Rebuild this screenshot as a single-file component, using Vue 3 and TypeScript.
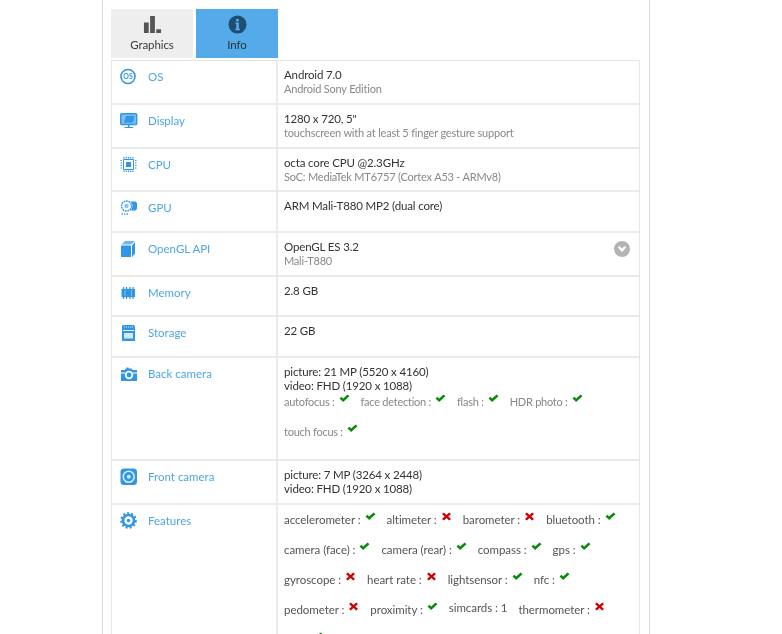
<script setup lang="ts">
interface Feat { label: string; ok?: boolean; shift?: boolean }
interface Row {
  key: string; label: string; primary: string[]; secondary?: string;
  lines?: Feat[][]; featMuted?: boolean; size: string; chevron?: boolean;
}
const rows: Row[] = [
  { key: 'os', label: 'OS', primary: ['Android 7.0'], secondary: 'Android Sony Edition', size: 'r44' },
  { key: 'display', label: 'Display', primary: ['1280 x 720, 5"'], secondary: 'touchscreen with at least 5 finger gesture support', size: 'r44' },
  { key: 'cpu', label: 'CPU', primary: ['octa core CPU @2.3GHz'], secondary: 'SoC: MediaTek MT6757 (Cortex A53 - ARMv8)', size: 'r43' },
  { key: 'gpu', label: 'GPU', primary: ['ARM Mali-T880 MP2 (dual core)'], size: 'r41' },
  { key: 'gl', label: 'OpenGL API', primary: ['OpenGL ES 3.2'], secondary: 'Mali-T880', size: 'r44', chevron: true },
  { key: 'mem', label: 'Memory', primary: ['2.8 GB'], size: 'r40' },
  { key: 'sto', label: 'Storage', primary: ['22 GB'], size: 'r41' },
  { key: 'back', label: 'Back camera', primary: ['picture: 21 MP (5520 x 4160)', 'video: FHD (1920 x 1088)'], size: 'r103', featMuted: true,
    lines: [
      [{ label: 'autofocus :', ok: true }, { label: 'face detection :', ok: true }, { label: 'flash :', ok: true }, { label: 'HDR photo :', ok: true }],
      [{ label: 'touch focus :', ok: true }],
    ] },
  { key: 'front', label: 'Front camera', primary: ['picture: 7 MP (3264 x 2448)', 'video: FHD (1920 x 1088)'], size: 'r44' },
  { key: 'feat', label: 'Features', primary: [], size: 'rf',
    lines: [
      [{ label: 'accelerometer :', ok: true }, { label: 'altimeter :', ok: false }, { label: 'barometer :', ok: false }, { label: 'bluetooth :', ok: true }],
      [{ label: 'camera (face) :', ok: true }, { label: 'camera (rear) :', ok: true }, { label: 'compass :', ok: true }, { label: 'gps :', ok: true }],
      [{ label: 'gyroscope :', ok: false }, { label: 'heart rate :', ok: false }, { label: 'lightsensor :', ok: true }, { label: 'nfc :', ok: true }],
      [{ label: 'pedometer :', ok: false }, { label: 'proximity :', ok: true }, { label: 'simcards : 1', shift: true }, { label: 'thermometer :', ok: false }],
      [{ label: 'wifi :', ok: true }],
    ] },
];
</script>

<template>
  <div class="page">
    <div class="sheet">
      <div class="tabs">
        <div class="tab">
          <svg class="tab-ico" viewBox="0 0 20 20"><path fill="#555" d="M1 8h5v11H1zM7.500 1h5v18h-5zM14 15h5v4h-5z"/></svg>
          <span>Graphics</span>
        </div>
        <div class="tab active">
          <svg class="tab-ico" viewBox="0 0 20 20"><circle cx="10" cy="10" r="9.500" fill="#1d4f73"/><circle cx="10" cy="5.500" r="1.500" fill="#5aa9e6"/><path fill="#5aa9e6" d="M7.800 8h3.700v6.500h1v1.500H7.600v-1.500h1.100V9.500h-.9z"/></svg>
          <span>Info</span>
        </div>
      </div>
      <div class="table">
        <div v-for="r in rows" :key="r.key" class="row" :class="r.size">
          <div class="head">
            <svg class="ico" viewBox="0 0 18 18">
              <template v-if="r.key === 'os'">
                <circle cx="8" cy="8.500" r="7" fill="none" stroke="#2f96e8" stroke-width="1.600"/>
                <text x="8" y="11" text-anchor="middle" class="ico-text">OS</text>
              </template>
              <template v-else-if="r.key === 'display'">
                <rect x="0.700" y="1.700" width="16" height="10.800" rx="1" fill="#7dbdf0" stroke="#2f96e8" stroke-width="1.400"/>
                <path fill="#2f96e8" d="M4 10.500 6 4h8.500l-1.500 6.500z"/>
                <path fill="#2f96e8" d="M8 13h1.500v2H13v1H4.500v-1H8z"/>
              </template>
              <template v-else-if="r.key === 'cpu'">
                <path fill="none" stroke="#2f96e8" d="M3.500 3.500h10v10h-10z"/>
                <path fill="#2f96e8" d="M6 6h5v5H6z"/>
                <path stroke="#2f96e8" stroke-width="1.200" fill="none" d="M4 1v1.500M6.300 1v1.500M8.500 1v1.500M10.700 1v1.500M13 1v1.500M4 14.500V16M6.300 14.500V16M8.500 14.500V16M10.700 14.500V16M13 14.500V16M0.500 4.500H2M0.500 7H2M0.500 9.500H2M0.500 12H2M15 4.500h1.500M15 7h1.500M15 9.500h1.500M15 12h1.500"/>
              </template>
              <template v-else-if="r.key === 'gpu'">
                <path fill="#2f96e8" d="M6 2.500h9.500l1.500 1.500v6l-1.500 1.500H9z"/>
                <circle cx="6.500" cy="7" r="6" fill="#fff"/>
                <circle cx="6.500" cy="7" r="5" fill="none" stroke="#2f96e8" stroke-width="1.400" stroke-dasharray="1.800 .7"/>
                <circle cx="6.500" cy="7" r="2.200" fill="#8ac4f2"/>
                <path stroke="#2f96e8" stroke-width="1.300" stroke-dasharray="1.300 1.300" d="M1.500 15h8"/>
              </template>
              <template v-else-if="r.key === 'gl'">
                <path fill="#2f96e8" d="M1 5.500h10V17H1z"/>
                <path fill="#6fb8ef" d="M1.500 4.500 5 1h9.500L11.500 4.500z"/>
                <path fill="#2f96e8" d="M12 5.500 15 2v11.500L12 17z"/>
              </template>
              <template v-else-if="r.key === 'mem'">
                <path fill="#2f96e8" d="M1.500 5h13.500v8H1.500z"/>
                <path stroke="#2f96e8" stroke-width="1.300" d="M3.500 3v2M6.500 3v2M10 3v2M13 3v2M3.500 13v2M6.500 13v2M10 13v2M13 13v2"/>
                <path stroke="#8ac4f2" stroke-width=".8" d="M5 6v6M11.500 6v6"/>
              </template>
              <template v-else-if="r.key === 'sto'">
                <path fill="#2f96e8" d="M3 1h11l1 1.500V17H2V2z"/>
                <path stroke="#fff" stroke-width=".8" stroke-dasharray="1 1" d="M4 3h9"/>
                <path fill="#fff" d="M3 6h11v1H3z"/>
                <path fill="#d5eafa" d="M4 9h9v5.500H4z"/>
              </template>
              <template v-else-if="r.key === 'back'">
                <path fill="#2f96e8" d="M1 5h4l.6-1.500h1V2.500h2v1h3l1 1.500H17v11H1z"/>
                <path fill="#fff" d="M1 7.500h4v1H1zM13 7.500h4v1h-4z"/>
                <circle cx="9" cy="10" r="4.200" fill="#fff"/>
                <circle cx="9" cy="10" r="2.400" fill="#2f96e8"/>
              </template>
              <template v-else-if="r.key === 'front'">
                <rect x="0.500" y="0.500" width="16.500" height="16.500" rx="3.500" fill="#2f96e8"/>
                <circle cx="8.700" cy="8.700" r="5.500" fill="none" stroke="#d6ebfb" stroke-width="1.600"/>
                <circle cx="8.700" cy="8.700" r="2" fill="#d6ebfb"/>
              </template>
              <template v-else>
                <circle cx="8.500" cy="8.500" r="5.500" fill="none" stroke="#2f96e8" stroke-width="2.600"/>
                <circle cx="8.500" cy="8.500" r="7.300" fill="none" stroke="#2f96e8" stroke-width="2" stroke-dasharray="2.050 2.050"/>
                <circle cx="8.500" cy="8.500" r="1.800" fill="#2f96e8"/>
              </template>
            </svg>
            <span class="label">{{ r.label }}</span>
          </div>
          <div class="body">
            <div v-for="p in r.primary" :key="p" class="primary">{{ p }}</div>
            <div v-if="r.secondary" class="secondary">{{ r.secondary }}</div>
            <div v-if="r.lines" class="feats" :class="{ muted: r.featMuted }">
              <div v-for="(line, i) in r.lines" :key="i" class="line">
                <span v-for="f in line" :key="f.label" class="feat" :class="{ shift: f.shift }">
                  {{ f.label }}
                  <svg v-if="f.ok === true" class="mark" viewBox="0 0 12 10"><path fill="#0a8a0a" d="M0.500 5 2.500 3l2 2L9.500 0.500l2 2-7 6.500z"/></svg>
                  <svg v-else-if="f.ok === false" class="mark" viewBox="0 0 12 10"><path fill="#d00000" d="M1 2.300 3 .5l3 2.700L9 .5l2 1.800L8 5l3 2.700-2 1.800-3-2.700-3 2.700-2-1.800L4 5z"/></svg>
                </span>
              </div>
            </div>
            <div v-if="r.chevron" class="chevron">
              <svg viewBox="0 0 16 16"><circle cx="8" cy="8" r="8" fill="#b4b4b4"/><path fill="#fff" d="M3.800 6.200 5.500 5 8 7.500 10.500 5l1.700 1.200L8 11.200z"/></svg>
            </div>
          </div>
        </div>
      </div>
    </div>
  </div>
</template>

<style>
html, body { margin: 0; overflow: hidden; background: #fff; }
</style>

<style scoped>
.page { height: 634px; overflow: hidden; background: #fff; font-family: Lato, "Noto Sans", sans-serif; font-size: 11.500px; line-height: 14px; color: #333; filter: blur(.3px); }
.sheet { width: 529px; margin-left: 102px; padding: 9px 9px 0 8px; border-left: 1px solid #ddd; border-right: 1px solid #ddd; height: 625px; }
.tabs { display: flex; gap: 3px; height: 49px; margin-bottom: 2px; }
.tab { width: 82px; background: #eee; display: flex; flex-direction: column; align-items: center; padding-top: 6px; box-sizing: border-box; color: #3c3c3c; letter-spacing: -.1px; }
.tab span { margin-top: 4px; }
.tab.active { background: #55abe9; color: #233; }
.tab-ico { width: 19px; height: 19px; }
.table { border: 1px solid #e6e6e6; border-bottom: 0; }
.row { display: grid; grid-template-columns: 166px 1fr; box-sizing: border-box; border-bottom: 2px solid #ebebeb; }
.r44 { height: 44px; }
.r43 { height: 43px; }
.r41 { height: 41px; }
.r40 { height: 40px; }
.r103 { height: 103px; }
.rf { min-height: 180px; border-bottom: 0; }
.head { display: flex; align-items: flex-start; gap: 10px; padding: 7px 0 0 8px; border-right: 2px solid #ebebeb; }
.ico { width: 18px; height: 18px; flex: none; }
.ico-text { font-size: 7px; font-weight: 700; fill: #2f96e8; font-family: Lato, sans-serif; }
.label { color: #4ea6e6; line-height: 18px; }
.body { position: relative; padding: 7px 0 0 6px; }
.primary { color: #333; letter-spacing: -.15px; }
.secondary { color: #888; font-size: 11px; letter-spacing: -.2px; }
.feats { color: #555; letter-spacing: -.05px; }
.rf .body { padding-top: 6px; }
.feats.muted { color: #888; font-size: 11px; letter-spacing: -.25px; }
.line { display: flex; column-gap: 11px; height: 18px; margin-bottom: 12px; }
.feat { display: inline-flex; align-items: flex-start; gap: 4px; height: 18px; line-height: 18px; white-space: nowrap; }
.feat.shift { margin-top: -2px; }
.mark { width: 11px; height: 9px; margin-top: 1px; flex: none; }
.chevron { position: absolute; right: 9px; top: 8px; width: 16px; height: 16px; }
.chevron svg { display: block; width: 16px; height: 16px; }
</style>
